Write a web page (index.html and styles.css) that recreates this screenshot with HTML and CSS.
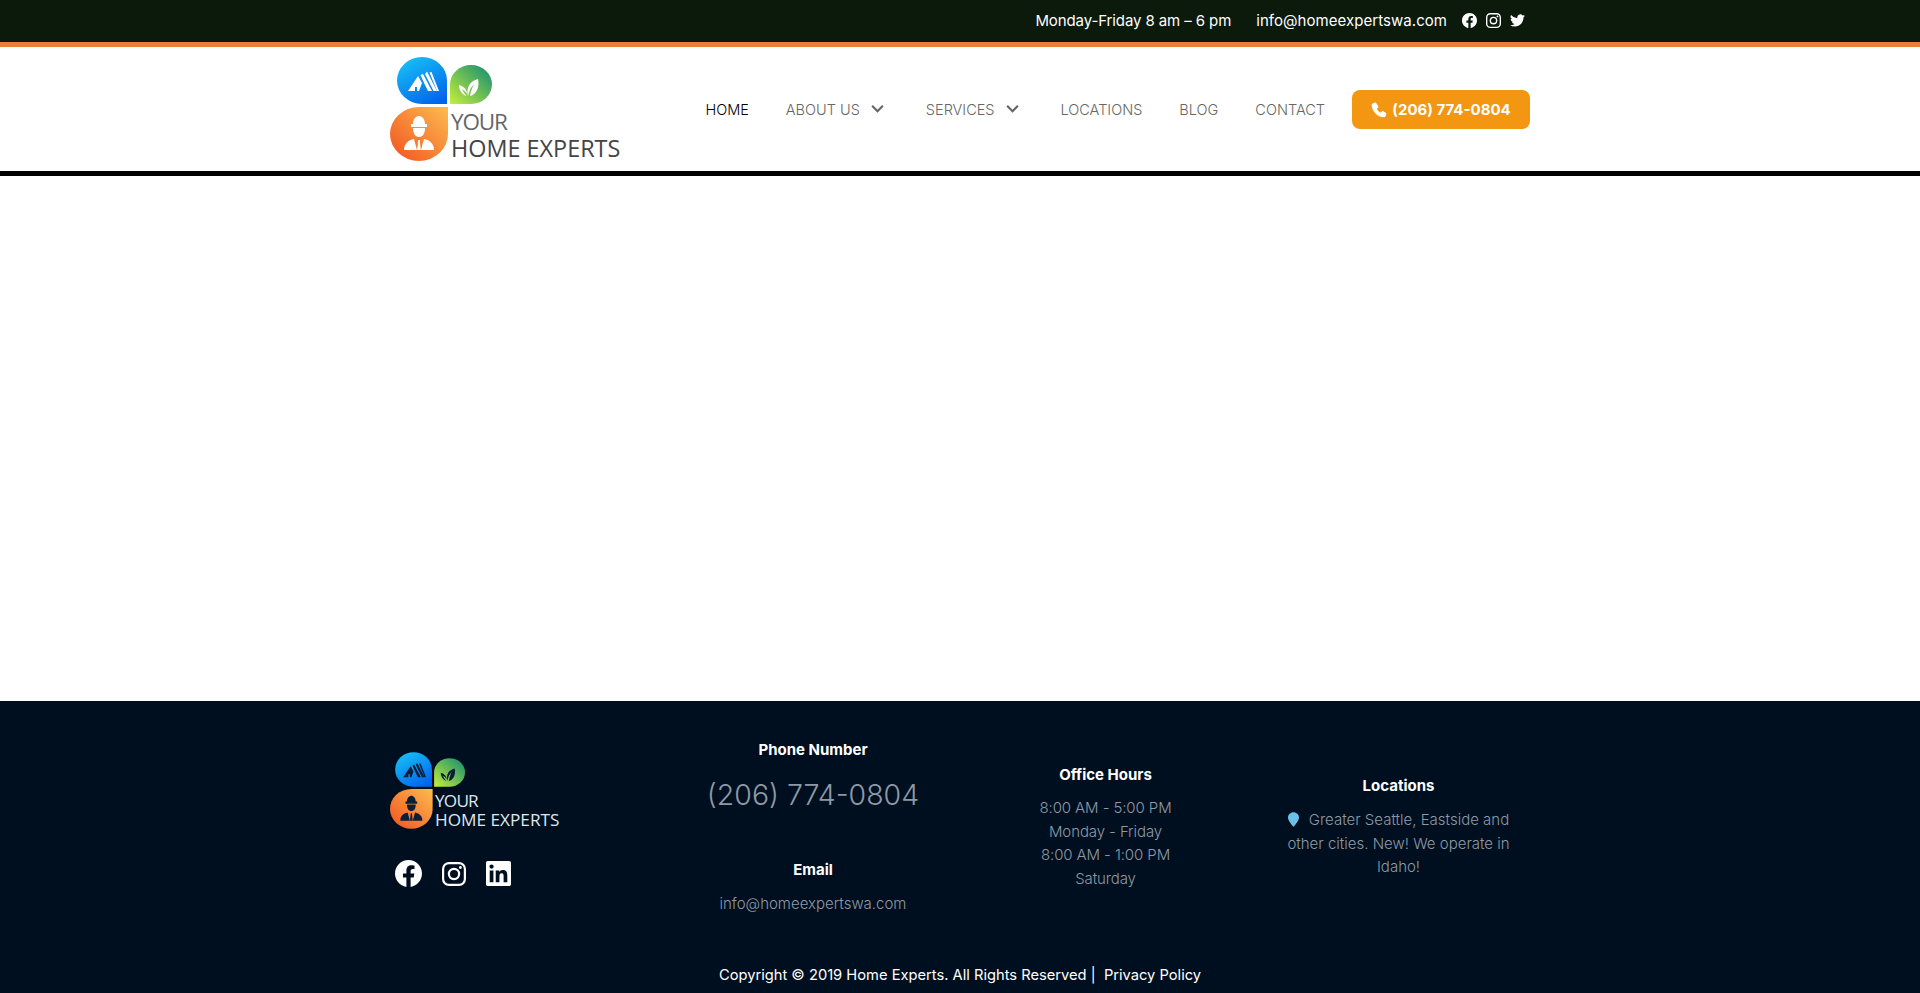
FILE: index.html
```html
<!DOCTYPE html>
<html lang="en">
<head>
    <meta charset="UTF-8">
    <meta name="viewport" content="width=device-width, initial-scale=1.0">
    <title>Your Home Experts</title>
    <link rel="stylesheet" href="styles.css">
</head>
<body>

<svg class="icon-defs" width="0" height="0" aria-hidden="true">
    <defs>
        <linearGradient id="grad-blue" x1="0.2" y1="0" x2="0.8" y2="1">
            <stop offset="0" stop-color="#19c0f5"/>
            <stop offset="1" stop-color="#0063ee"/>
        </linearGradient>
        <linearGradient id="grad-green" x1="1" y1="0" x2="0" y2="1">
            <stop offset="0" stop-color="#0e8a72"/>
            <stop offset="1" stop-color="#c6ef3c"/>
        </linearGradient>
        <linearGradient id="grad-orange" x1="1" y1="0" x2="0" y2="1">
            <stop offset="0" stop-color="#fdbb4f"/>
            <stop offset="1" stop-color="#f1511f"/>
        </linearGradient>
        <symbol id="logo-mark" viewBox="0 0 102 104">
            <path d="M57 47H32a25 23.500 0 1 1 25-23.500z" fill="url(#grad-blue)"/>
            <path d="M60 47V27.500a21 19.500 0 1 1 21 19.500z" fill="url(#grad-green)"/>
            <path d="M58 50v27a29 27 0 1 1-29-27z" fill="url(#grad-orange)"/>
            <g fill="currentColor">
                <path d="M18 34l10-15 4 7-3 8h-2v-4h-2v4z"/>
                <path d="M30.500 18l2.500-1 9 17h-4l-3-6z"/>
                <path d="M35 17l2-2.500 10 19.500h-3.500z"/>
                <path d="M39.500 15.500l2-.5 7.500 19h-2z"/>
                <path d="M78 39c-2-9 2-15 10-17 2 8-2 16-8 17 1-5 2-8 4-12-3 3-5 7-6 12z"/>
                <path d="M76.500 39c-4-1-7.500-6-7.500-11 4 1 8 4 8 9-1-2-3-4-5-5 1 3 3 5 4.500 7z"/>
                <path d="M23 67c0-5 3-8 6-8s6 3 6 8h2v3H21v-3z"/>
                <path d="M23 71h12c0 5-2 9-6 9s-6-4-6-9z"/>
                <path d="M14 93c0-6 4-10 10-11l3 11z"/>
                <path d="M28.200 83h1.600l1 10h-3.600z"/>
                <path d="M44 93c0-6-4-10-10-11l-3 11z"/>
            </g>
        </symbol>
        <symbol id="ico-facebook" viewBox="0 0 24 24">
            <path d="M24 12.070C24 5.400 18.630 0 12 0S0 5.400 0 12.070c0 6.030 4.390 11.020 10.130 11.930v-8.440H7.080v-3.490h3.050V9.410c0-3.030 1.790-4.700 4.530-4.700 1.310 0 2.690.24 2.690.24v2.970h-1.510c-1.490 0-1.960.93-1.960 1.880v2.270h3.330l-.53 3.490h-2.800V24C19.610 23.090 24 18.100 24 12.070z"/>
        </symbol>
        <symbol id="ico-instagram" viewBox="0 0 24 24">
            <path d="M7 0h10a7 7 0 0 1 7 7v10a7 7 0 0 1-7 7H7a7 7 0 0 1-7-7V7a7 7 0 0 1 7-7zm0 2.200A4.800 4.800 0 0 0 2.200 7v10A4.800 4.800 0 0 0 7 21.800h10a4.800 4.800 0 0 0 4.800-4.800V7A4.800 4.800 0 0 0 17 2.200zM12 5.800a6.200 6.200 0 1 1 0 12.400 6.200 6.200 0 0 1 0-12.400zM12 8a4 4 0 1 0 0 8 4 4 0 0 0 0-8zm6.400-4a1.450 1.450 0 1 1 0 2.900 1.450 1.450 0 0 1 0-2.900z" fill-rule="evenodd"/>
        </symbol>
        <symbol id="ico-twitter" viewBox="0 0 24 24">
            <path d="M24 4.560a9.830 9.830 0 0 1-2.830.78 4.930 4.930 0 0 0 2.160-2.720 9.860 9.860 0 0 1-3.130 1.190 4.920 4.920 0 0 0-8.380 4.490A13.970 13.970 0 0 1 1.670 3.150a4.920 4.920 0 0 0 1.520 6.570 4.900 4.900 0 0 1-2.230-.62v.06a4.920 4.920 0 0 0 3.950 4.830 4.940 4.940 0 0 1-2.220.08 4.930 4.930 0 0 0 4.600 3.420A9.870 9.870 0 0 1 0 19.540a13.940 13.940 0 0 0 7.550 2.210c9.060 0 14.010-7.500 14.010-14.010 0-.21 0-.42-.02-.63A10 10 0 0 0 24 4.560z"/>
        </symbol>
        <symbol id="ico-linkedin" viewBox="0 0 24 24">
            <path d="M22.230 0H1.770C.79 0 0 .77 0 1.730v20.540C0 23.230.79 24 1.770 24h20.460c.98 0 1.770-.77 1.770-1.730V1.730C24 .77 23.210 0 22.230 0zM7.120 20.450H3.560V9h3.560zM5.340 7.430a2.060 2.060 0 1 1 0-4.120 2.060 2.060 0 0 1 0 4.120zm15.110 13.020h-3.550v-5.570c0-1.330-.03-3.040-1.850-3.040-1.860 0-2.140 1.450-2.140 2.940v5.670H9.350V9h3.410v1.560h.05c.48-.9 1.640-1.850 3.370-1.850 3.600 0 4.270 2.370 4.270 5.450z"/>
        </symbol>
        <symbol id="ico-phone" viewBox="0 0 24 24">
            <path d="M5.500 1L2.500 2.200C1.500 2.600 1 3.500 1 4.500 1.500 14.500 9.500 22.500 19.500 23c1 0 1.900-.5 2.300-1.500l1.200-3c.3-.9 0-1.800-.8-2.300l-3.700-2.300c-.8-.5-1.800-.3-2.400.4l-1.500 1.900c-2.600-1.300-4.700-3.400-6-6l1.900-1.500c.7-.6.9-1.600.4-2.400L8 1.700C7.500.9 6.400.6 5.500 1z"/>
        </symbol>
    </defs>
</svg>

<div class="topbar">
    <div class="wrap topbar-inner">
        <span class="topbar-hours">Monday-Friday 8 am – 6 pm</span>
        <a class="topbar-mail" href="#">info@homeexpertswa.com</a>
        <div class="topbar-social">
            <a href="#"><svg><use href="#ico-facebook"/></svg></a>
            <a href="#"><svg><use href="#ico-instagram"/></svg></a>
            <a href="#"><svg><use href="#ico-twitter"/></svg></a>
        </div>
    </div>
</div>

<header class="site-header">
    <div class="wrap header-inner">
        <a class="logo" href="#">
            <svg class="logo-mark"><use href="#logo-mark"/></svg>
            <span class="logo-text">
                <span class="logo-your">YOUR</span>
                <span class="logo-name">HOME EXPERTS</span>
            </span>
        </a>
        <nav class="main-nav">
            <a class="nav-link active" href="#">HOME</a>
            <a class="nav-link has-sub" href="#">ABOUT US
                <svg class="chevron" viewBox="0 0 14 9"><path d="M2 1.500l5 5 5-5"/></svg>
            </a>
            <a class="nav-link has-sub" href="#">SERVICES
                <svg class="chevron" viewBox="0 0 14 9"><path d="M2 1.500l5 5 5-5"/></svg>
            </a>
            <a class="nav-link" href="#">LOCATIONS</a>
            <a class="nav-link" href="#">BLOG</a>
            <a class="nav-link" href="#">CONTACT</a>
        </nav>
        <a class="call-btn" href="#"><svg><use href="#ico-phone"/></svg>(206) 774-0804</a>
    </div>
</header>

<main class="content"></main>

<footer class="site-footer">
    <div class="wrap footer-cols">
        <div class="footer-brand">
            <a class="logo logo-small" href="#">
                <svg class="logo-mark"><use href="#logo-mark"/></svg>
                <span class="logo-text">
                    <span class="logo-your">YOUR</span>
                    <span class="logo-name">HOME EXPERTS</span>
                </span>
            </a>
            <div class="footer-social">
                <a href="#"><svg class="ico-fb"><use href="#ico-facebook"/></svg></a>
                <a href="#"><svg class="ico-ig"><use href="#ico-instagram"/></svg></a>
                <a href="#"><svg class="ico-li"><use href="#ico-linkedin"/></svg></a>
            </div>
        </div>
        <div class="footer-col col-contact">
            <h4>Phone Number</h4>
            <p class="footer-phone">(206) 774-0804</p>
            <h4 class="email-title">Email</h4>
            <p class="footer-text">info@homeexpertswa.com</p>
        </div>
        <div class="footer-col col-hours">
            <h4>Office Hours</h4>
            <p class="footer-text">8:00 AM - 5:00 PM<br>Monday - Friday<br>8:00 AM - 1:00 PM<br>Saturday</p>
        </div>
        <div class="footer-col col-locations">
            <h4>Locations</h4>
            <p class="footer-text"><svg class="pin" viewBox="0 0 12 16"><path d="M6 0c3.300 0 6 2.500 6 5.800C12 9.500 8 13.500 6 16 4 13.500 0 9.500 0 5.800 0 2.500 2.700 0 6 0z"/></svg>Greater Seattle, Eastside and other cities. New! We operate in Idaho!</p>
        </div>
    </div>
    <p class="copyright">Copyright © 2019 Home Experts. All Rights Reserved | &nbsp;<a href="#">Privacy Policy</a></p>
</footer>

</body>
</html>
```

FILE: styles.css
```css
* { box-sizing: border-box; }
html, body { height: 100%; }
body {
    margin: 0;
    display: flex;
    flex-direction: column;
    min-height: 993px;
    font-family: Inter, "Open Sans", "Liberation Sans", sans-serif;
    font-size: 15px;
    color: #333;
    background-color: #fff;
}
a { color: inherit; text-decoration: none; }
.icon-defs { position: absolute; }
.wrap {
    width: 1140px;
    margin: 0 auto;
}

.topbar {
    height: 47px;
    background-color: #0b1a0b;
    border-bottom: 5px solid #e8803a;
    color: #fff;
}
.topbar-inner {
    display: flex;
    align-items: center;
    justify-content: flex-end;
    height: 40px;
    padding-right: 5px;
}
.topbar-hours { margin-right: 25px; letter-spacing: -0.1px; }
.topbar-mail { margin-right: 15px; letter-spacing: 0.05px; }
.topbar-social { display: flex; gap: 9px; }
.topbar-social svg { display: block; width: 15px; height: 15px; fill: #fff; }

.site-header {
    height: 129px;
    background-color: #fff;
    border-bottom: 5px solid #000;
}
.header-inner {
    display: flex;
    align-items: center;
    height: 124px;
}
.logo { display: flex; align-items: flex-end; color: #fff; }
.logo-mark { display: block; flex: none; width: 102px; height: 104px; }
.logo-text {
    display: flex;
    flex-direction: column;
    margin-left: -41px;
    font-family: "Open Sans", sans-serif;
    color: #444;
}
.logo-your { font-size: 22.500px; line-height: 27px; color: #666; letter-spacing: -1.200px; }
.logo-name { font-size: 23.400px; line-height: 26px; white-space: nowrap; }

.main-nav {
    display: flex;
    align-items: center;
    margin-left: auto;
}
.nav-link {
    display: flex;
    align-items: center;
    margin-right: 37px;
    font-size: 14.500px;
    font-weight: 300;
    color: #666;
}
.nav-link.active { color: #000; }
.nav-link.has-sub { margin-right: 41px; }
.nav-link:last-child { margin-right: 27px; }
.chevron {
    width: 15px;
    height: 10px;
    margin-left: 10px;
    fill: none;
    stroke: #666;
    stroke-width: 2;
}
.call-btn {
    display: flex;
    align-items: center;
    justify-content: center;
    width: 178px;
    height: 39px;
    background-color: #f39712;
    border-radius: 8px;
    color: #fff;
    font-size: 15px;
    font-weight: 700;
    padding-top: 1px;
}
.call-btn svg { width: 16px; height: 16px; margin-right: 5px; fill: #fff; }

.content { flex: 1; }

.site-footer {
    height: 292px;
    background-color: #000f20;
    color: #8e99a5;
}
.footer-cols {
    display: grid;
    grid-template-columns: 277px 292px 293px 293px;
    height: 264px;
}
.footer-brand { padding-top: 51px; }
.logo-small .logo-mark { width: 75px; height: 77px; color: #0b1e3a; }
.logo-small .logo-text { margin-left: -30px; }
.logo-small .logo-your,
.logo-small .logo-name { font-size: 17.200px; color: #dfe7ee; }
.logo-small .logo-your { line-height: 20.500px; letter-spacing: -0.800px; }
.logo-small .logo-name { line-height: 18px; }
.footer-social { display: flex; align-items: center; gap: 20px; margin: 31px 0 0 5px; }
.footer-social svg { display: block; fill: #fff; }
.ico-fb { width: 27px; height: 27px; }
.ico-ig { width: 24px; height: 24px; }
.ico-li { width: 25px; height: 25px; }

.footer-col { text-align: center; }
.footer-col h4 {
    margin: 0;
    color: #fff;
    font-size: 15px;
    font-weight: 700;
    line-height: 20px;
}
.col-contact { padding-top: 39px; }
.col-hours { padding-top: 64px; }
.col-hours .footer-text { margin-top: 11px; letter-spacing: -0.100px; }
.col-locations { padding: 75px 32px 0; }
.footer-phone {
    margin: 17px 0 0;
    font-size: 28.500px;
    font-weight: 300;
    line-height: 36px;
}
.footer-col .email-title { margin-top: 47px; }
.footer-text {
    margin: 12px 0 0;
    font-size: 15px;
    font-weight: 300;
    line-height: 23.600px;
}
.pin { width: 11px; height: 15px; margin-right: 10px; vertical-align: -2px; fill: #6cc0e8; }
.copyright {
    margin: 0;
    text-align: center;
    color: #fff;
    font-size: 14.700px;
    line-height: 20px;
}
```
